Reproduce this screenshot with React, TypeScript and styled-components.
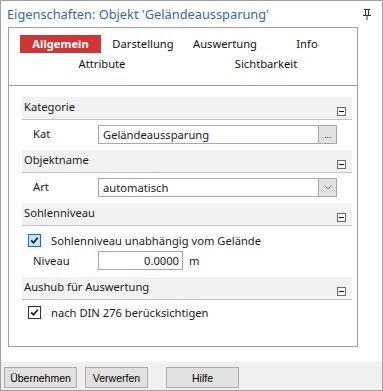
import { createGlobalStyle, styled } from 'styled-components'

const GlobalStyle = createGlobalStyle`
  html, body {
    margin: 0;
    padding: 0;
    background: #ffffff;
  }
  body {
    font-family: 'Noto Sans', 'Open Sans', sans-serif;
    font-size: 11.2px;
    color: #1a1a1a;
  }
`

const Window = styled.div`
  width: 383px;
  height: 391px;
  box-sizing: border-box;
  border: 1px solid #a0a0a0;
  background: #ffffff;
  display: flex;
  flex-direction: column;
`

const TitleBar = styled.div`
  height: 26px;
  display: flex;
  align-items: center;
  justify-content: space-between;
  padding: 0 11px 0 6px;
`

const Title = styled.span`
  color: #3168b0;
  font-size: 12.8px;
  white-space: nowrap;
`

const Panel = styled.div`
  height: 320px;
  box-sizing: border-box;
  margin: 0 24px 0 7px;
  border: 1px solid #a0a0a0;
  display: flex;
  flex-direction: column;
`

const Tabs = styled.div`
  height: 58px;
  box-sizing: border-box;
  padding: 7px 0 0 11px;
  border-bottom: 1px solid #a0a0a0;
  display: flex;
  flex-direction: column;
  gap: 2px;
`

const TabRow = styled.div<{ $cols: number; $width: number }>`
  display: grid;
  grid-template-columns: repeat(${p => p.$cols}, ${p => p.$width}px);
`

const Tab = styled.div<{ $active?: boolean }>`
  height: 18px;
  line-height: 18px;
  text-align: center;
  width: ${p => (p.$active ? '81px' : 'auto')};
  background: ${p => (p.$active ? '#d03536' : 'transparent')};
  color: ${p => (p.$active ? '#ffffff' : '#111111')};
  font-weight: ${p => (p.$active ? 700 : 400)};
`

const Grid = styled.div`
  padding: 11px 5px 0 13px;
  display: flex;
  flex-direction: column;
`

const SectionHeader = styled.div`
  height: 23px;
  box-sizing: border-box;
  border-bottom: 1px solid #c4c4c4;
  background: #f2f2f2;
  display: flex;
  justify-content: space-between;
  padding: 0 6px 0 2px;
`

const HeaderText = styled.span`
  line-height: 20px;
`

const Collapse = styled.span`
  align-self: flex-end;
  margin-bottom: 3px;
  width: 9px;
  height: 9px;
  box-sizing: border-box;
  border: 1px solid #6a6a6a;
  background: #ffffff;
  display: flex;
  align-items: center;
  justify-content: center;
  &::after {
    content: '';
    width: 5px;
    height: 1px;
    background: #111111;
  }
`

const PropRow = styled.div<{ $height: number }>`
  height: ${p => p.$height}px;
  display: grid;
  grid-template-columns: 65px 1fr;
  align-items: start;
  padding: 0 15px 0 11px;
`

const Label = styled.span<{ $top: number }>`
  padding-top: ${p => p.$top}px;
`

const Field = styled.div<{ $top: number; $width?: number }>`
  margin-top: ${p => p.$top}px;
  height: 19px;
  width: ${p => (p.$width ? `${p.$width}px` : 'auto')};
  box-sizing: border-box;
  border: 1px solid #a8a8a8;
  background: #ffffff;
  display: flex;
  align-items: stretch;
`

const FieldText = styled.span<{ $right?: boolean }>`
  flex: 1;
  line-height: 17px;
  padding: 0 ${p => (p.$right ? '3px' : '4px')};
  text-align: ${p => (p.$right ? 'right' : 'left')};
`

const FieldButton = styled.span`
  width: 17px;
  border-left: 1px solid #a8a8a8;
  background: #e2e2e2;
  display: flex;
  align-items: center;
  justify-content: center;
  font-size: 9px;
  color: #222222;
`

const FieldWithUnit = styled.div`
  display: flex;
  align-items: flex-start;
  gap: 6px;
`

const Unit = styled.span`
  margin-top: 3px;
`

const CheckRow = styled.label<{ $height: number; $top: number }>`
  height: ${p => p.$height}px;
  box-sizing: border-box;
  padding: ${p => p.$top}px 0 0 6px;
  display: flex;
  align-items: flex-start;
  gap: 10px;
`

const CheckText = styled.span`
  line-height: 13px;
`

const Box = styled.span<{ $focused?: boolean }>`
  width: 13px;
  height: 13px;
  box-sizing: border-box;
  border: 1px solid ${p => (p.$focused ? '#0d6fc2' : '#333333')};
  background: ${p => (p.$focused ? '#cce4f7' : '#ffffff')};
  display: flex;
  align-items: center;
  justify-content: center;
  flex: none;
`

const Spacer = styled.div`
  height: 15px;
`

const Footer = styled.div`
  height: 28px;
  background: #f0f0f0;
  padding: 5px 0 0 3px;
  box-sizing: border-box;
  display: flex;
  align-items: flex-start;
`

const Button = styled.button<{ $width: number; $gap: number }>`
  width: ${p => p.$width}px;
  height: 21px;
  margin-right: ${p => p.$gap}px;
  box-sizing: border-box;
  border: 1px solid #adadad;
  background: #e1e1e1;
  font-family: 'Liberation Sans', Arial, sans-serif;
  font-size: 10.5px;
  color: #000000;
  padding: 0;
`

function Pin() {
  return (
    <svg width="8" height="11" viewBox="0 0 8 11">
      <path d="M1 0.5H7M2.5 0.5V6M5.5 0.5V6M0 6.5H8M4 6.5V11" stroke="#333333" strokeWidth="1" fill="none" />
    </svg>
  )
}

function Check() {
  return (
    <svg width="9" height="9" viewBox="0 0 9 9">
      <path d="M1.2 4.4L3.5 6.8L7.8 1.8" stroke="#1a1a1a" strokeWidth="1.7" fill="none" />
    </svg>
  )
}

function Chevron() {
  return (
    <svg width="8" height="5" viewBox="0 0 8 5">
      <path d="M0.5 0.5L4 4L7.5 0.5" stroke="#7a7a7a" strokeWidth="1" fill="none" />
    </svg>
  )
}

function Section({ title }: { title: string }) {
  return (
    <SectionHeader>
      <HeaderText>{title}</HeaderText>
      <Collapse />
    </SectionHeader>
  )
}

export default function App() {
  return (
    <>
      <GlobalStyle />
      <Window>
        <TitleBar>
          <Title>Eigenschaften: Objekt 'Geländeaussparung'</Title>
          <Pin />
        </TitleBar>
        <Panel>
          <Tabs>
            <TabRow $cols={4} $width={82}>
              <Tab $active>Allgemein</Tab>
              <Tab>Darstellung</Tab>
              <Tab>Auswertung</Tab>
              <Tab>Info</Tab>
            </TabRow>
            <TabRow $cols={2} $width={164}>
              <Tab>Attribute</Tab>
              <Tab>Sichtbarkeit</Tab>
            </TabRow>
          </Tabs>
          <Grid>
            <Section title="Kategorie" />
            <PropRow $height={30}>
              <Label $top={6}>Kat</Label>
              <Field $top={5}>
                <FieldText>Geländeaussparung</FieldText>
                <FieldButton>...</FieldButton>
              </Field>
            </PropRow>
            <Section title="Objektname" />
            <PropRow $height={30}>
              <Label $top={6}>Art</Label>
              <Field $top={5}>
                <FieldText>automatisch</FieldText>
                <FieldButton>
                  <Chevron />
                </FieldButton>
              </Field>
            </PropRow>
            <Section title="Sohlenniveau" />
            <CheckRow $height={24} $top={8}>
              <Box $focused>
                <Check />
              </Box>
              <CheckText>Sohlenniveau unabhängig vom Gelände</CheckText>
            </CheckRow>
            <PropRow $height={27}>
              <Label $top={3}>Niveau</Label>
              <FieldWithUnit>
                <Field $top={1} $width={85}>
                  <FieldText $right>0.0000</FieldText>
                </Field>
                <Unit>m</Unit>
              </FieldWithUnit>
            </PropRow>
            <Section title="Aushub für Auswertung" />
            <CheckRow $height={24} $top={6}>
              <Box>
                <Check />
              </Box>
              <CheckText>nach DIN 276 berücksichtigen</CheckText>
            </CheckRow>
          </Grid>
        </Panel>
        <Spacer />
        <Footer>
          <Button $width={73} $gap={8}>Übernehmen</Button>
          <Button $width={63} $gap={18}>Verwerfen</Button>
          <Button $width={73} $gap={0}>Hilfe</Button>
        </Footer>
      </Window>
    </>
  )
}
